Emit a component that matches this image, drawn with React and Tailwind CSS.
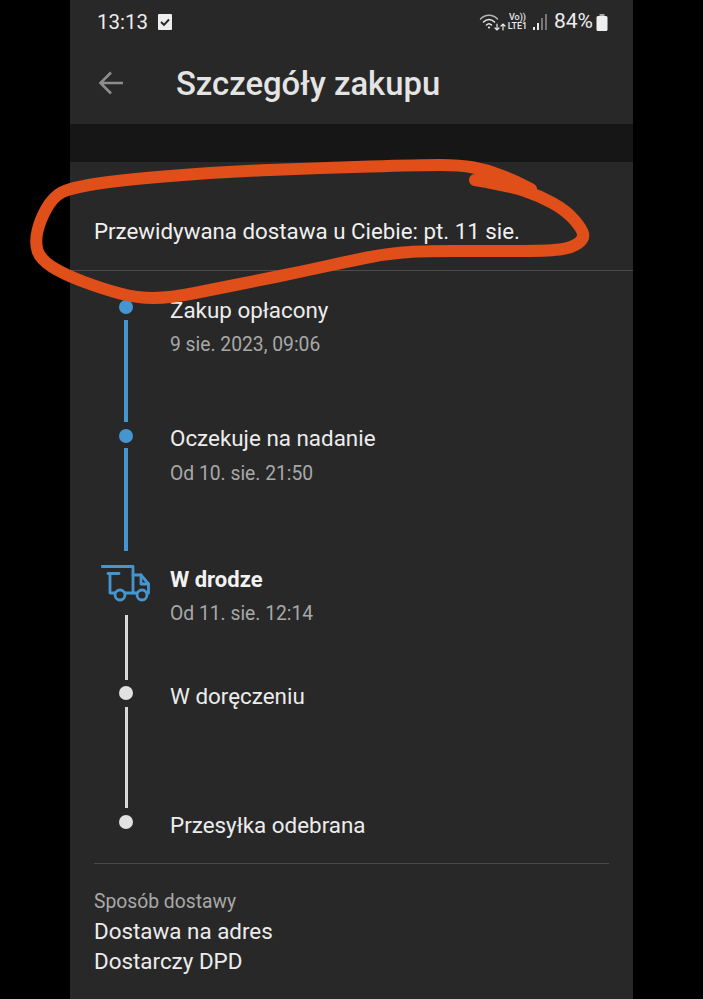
const roboto = "font-['Roboto',sans-serif]";

// centre line of the hand-drawn loop, traced from the screenshot
const loop = [
  [475, 180], [510, 186], [540, 196], [565, 210], [580, 226], [585, 238], [572, 248], [547, 251],
  [487, 251], [420, 251], [385, 254], [345, 262], [300, 272], [250, 282], [220, 288], [170, 298],
  [137, 298], [103, 289], [63, 274], [40, 259], [35, 242], [40, 220], [53, 197], [70, 188],
  [120, 180], [220, 172], [320, 168], [420, 165], [460, 165], [487, 170], [513, 180], [531, 189],
];

const loopPath = () => {
  let d = `M${loop[0][0]} ${loop[0][1]}`;
  for (let i = 1; i < loop.length - 1; i++) {
    const mx = (loop[i][0] + loop[i + 1][0]) / 2;
    const my = (loop[i][1] + loop[i + 1][1]) / 2;
    d += `Q${loop[i][0]} ${loop[i][1]} ${mx} ${my}`;
  }
  return d + `L${loop[loop.length - 1][0]} ${loop[loop.length - 1][1]}`;
};

function Dot({ blue }) {
  return <div className={`h-[14px] w-[14px] shrink-0 rounded-full ${blue ? 'bg-[#4596cf]' : 'bg-[#e2e2e2]'}`} />;
}

function Truck() {
  return (
    <svg width="50" height="38" viewBox="0 0 50 38" fill="none" stroke="#4596cf" strokeWidth="2.8" strokeLinejoin="round" strokeLinecap="round">
      <path d="M1 2.5H32V29" />
      <path d="M7 9.5H18" />
      <path d="M9 9.5V29H14" />
      <path d="M24 29H36" />
      <path d="M32 11H40L47.5 20V29H46" />
      <path d="M40 11V20H47.5" />
      <circle cx="19" cy="31" r="5" />
      <circle cx="41" cy="31" r="5" />
    </svg>
  );
}

function StatusIcons() {
  return (
    <div className="flex items-center">
      <svg width="27" height="20" viewBox="0 0 27 20" fill="none" stroke="#e8e8e8" strokeLinecap="round">
        <path d="M1.5 7C6 2 14 2 18.5 7" strokeWidth="1.4" stroke="#b5b5b5" />
        <path d="M4.5 10C8 6.5 12 6.5 15.5 10" strokeWidth="1.5" />
        <path d="M7.5 13C9 11.5 11 11.5 12.5 13" strokeWidth="1.5" />
        <circle cx="10" cy="15.5" r="1.1" fill="#e8e8e8" stroke="none" />
        <path d="M18 12V18M16 16L18 18L20 16" strokeWidth="1.2" />
        <path d="M24 18V12M22 14L24 12L26 14" strokeWidth="1.2" />
      </svg>
      <div className="ml-[1px] flex w-[21px] flex-col items-center text-[9px] font-medium leading-[9px] text-[#e8e8e8]">
        <span>Vo))</span>
        <span>LTE1</span>
      </div>
      <svg className="ml-[5px]" width="16" height="18" viewBox="0 0 16 18">
        <rect x="0" y="14" width="2" height="3" fill="#e8e8e8" />
        <rect x="4" y="10" width="2" height="7" fill="#e8e8e8" />
        <rect x="8" y="5" width="2" height="12" fill="#777" />
        <rect x="12" y="1" width="2" height="16" fill="#777" />
      </svg>
    </div>
  );
}

function Step({ marker, title, sub, bold, h, textTop, subTop = 'mt-[5px]', lineClass }) {
  return (
    <div className={`flex ${h}`}>
      <div className="flex w-[64px] flex-col items-center">
        {marker}
        {lineClass && <div className={lineClass} />}
      </div>
      <div className={`ml-3 ${textTop}`}>
        <div className={`leading-[30px] ${bold ? 'text-[22px] font-bold text-[#f2f2f2]' : 'text-[22.4px] text-[#ececec]'}`}>{title}</div>
        {sub && <div className={`${subTop} text-[19.3px] leading-[30px] text-[#a8a8a8]`}>{sub}</div>}
      </div>
    </div>
  );
}

export default function App() {
  return (
    <div className={`relative flex h-[999px] w-[703px] justify-center overflow-hidden bg-black ${roboto}`}>
      <div className="h-full w-[563px] bg-[#282828]">
        {/* status bar */}
        <div className="flex h-[42px] items-center justify-between pl-[27px] pr-[25px] pt-[2px] text-[#ececec]">
          <div className="flex items-center">
            <span className="text-[20.5px]">13:13</span>
            <div className="ml-[10px] flex h-[16px] w-[14px] items-center justify-center rounded-[1px] bg-[#eeeeee]">
              <svg width="10" height="10" viewBox="0 0 10 10" fill="none" stroke="#282828" strokeWidth="1.9">
                <path d="M1 5L4 7.8L9 2.5" />
              </svg>
            </div>
          </div>
          <div className="flex items-center">
            <StatusIcons />
            <span className="ml-[5px] text-[21px]">84%</span>
            <svg className="ml-[3px]" width="12" height="17" viewBox="0 0 12 17">
              <rect x="3.5" y="0" width="5" height="2" fill="#a9a9a9" />
              <rect x="0.5" y="2" width="11" height="15" rx="1.5" fill="#efefef" />
            </svg>
          </div>
        </div>

        {/* header */}
        <div className="flex h-[82px] items-center">
          <svg className="ml-[28px]" width="26" height="26" viewBox="0 0 26 26" fill="none" stroke="#8d8d8d" strokeWidth="2.6">
            <path d="M25 13H3M13 2.5L2.5 13L13 23.5" />
          </svg>
          <h1 className="ml-[52px] mt-[3px] text-[32.8px] font-medium leading-none text-[#e4e4e4]">Szczegóły zakupu</h1>
        </div>

        <div className="h-[38px] bg-[#161616]" />

        {/* delivery estimate */}
        <div className="flex h-[109px] items-center border-b border-[#4a4a4a] px-6 pt-[31px]">
          <span className="text-[22.3px] text-[#f0f0f0]">Przewidywana dostawa u Ciebie: pt. 11 sie.</span>
        </div>

        {/* timeline */}
        <div className="px-6 pt-[29px]">
          <Step h="h-[129px]" marker={<Dot blue />} title="Zakup opłacony" sub="9 sie. 2023, 09:06" textTop="-mt-[5px]" lineClass="mt-[6px] h-[102px] w-[4px] bg-[#4596cf]" />
          <Step h="h-[135px]" marker={<Dot blue />} title="Oczekuje na nadanie" sub="Od 10. sie. 21:50" textTop="-mt-[6px]" subTop="mt-[6px]" lineClass="mt-[5px] h-[103px] w-[4px] bg-[#4596cf]" />
          <Step h="h-[122px]" marker={<Truck />} title="W drodze" sub="Od 11. sie. 12:14" bold textTop="mt-[1px]" subTop="mt-[4px]" lineClass="mt-[13px] h-[65px] w-[3px] bg-[#d8d8d8]" />
          <Step h="h-[129px]" marker={<Dot />} title="W doręczeniu" textTop="-mt-[5px]" lineClass="mt-[7px] h-[101px] w-[3px] bg-[#d8d8d8]" />
          <Step h="h-[48px]" marker={<Dot />} title="Przesyłka odebrana" textTop="-mt-[5px]" />
        </div>

        {/* delivery method */}
        <div className="mx-6 border-t border-[#4a4a4a] pt-[24px]">
          <div className="text-[19.3px] leading-[28px] text-[#a8a8a8]">Sposób dostawy</div>
          <div className="text-[22.4px] leading-[30px] text-[#ececec]">Dostawa na adres</div>
          <div className="text-[22.4px] leading-[30px] text-[#ececec]">Dostarczy DPD</div>
        </div>
      </div>

      {/* hand-drawn annotation */}
      <svg className="pointer-events-none absolute left-0 top-0" width="703" height="320" viewBox="0 0 703 320" fill="none">
        <path d={loopPath()} stroke="#e04e1a" strokeWidth="12" strokeLinecap="round" strokeLinejoin="round" />
      </svg>
    </div>
  );
}
